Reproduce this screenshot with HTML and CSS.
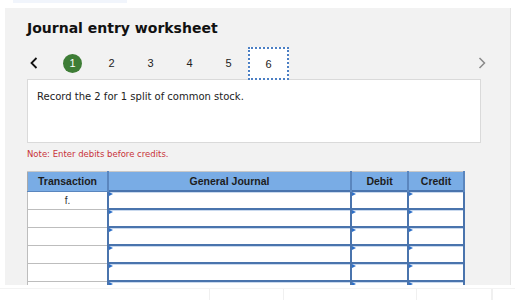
FILE: index.html
```html
<!DOCTYPE html>
<html>
<head>
<meta charset="utf-8">
<link rel="stylesheet" href="styles.css">
</head>
<body>
<div class="topstrip"></div>
<div class="panel">
  <h1 class="title">Journal entry worksheet</h1>
  <div class="nav">
    <div class="prev">
      <svg width="8" height="12" viewBox="0 0 8 12"><path d="M6.5 1 L1.5 6 L6.5 11" fill="none" stroke="#111" stroke-width="1.8"/></svg>
    </div>
    <div class="step"><span class="current">1</span></div>
    <div class="step">2</div>
    <div class="step">3</div>
    <div class="step">4</div>
    <div class="step">5</div>
    <div class="step active">6</div>
    <div class="spacer"></div>
    <div class="next">
      <svg width="8" height="12" viewBox="0 0 8 12"><path d="M1.5 1 L6.5 6 L1.5 11" fill="none" stroke="#8a8a8a" stroke-width="1.5"/></svg>
    </div>
  </div>
  <div class="prompt">Record the 2 for 1 split of common stock.</div>
  <p class="note">Note: Enter debits before credits.</p>
  <table class="journal">
    <thead>
      <tr><th class="c-tr">Transaction</th><th class="c-gj">General Journal</th><th class="c-dr">Debit</th><th class="c-cr">Credit</th></tr>
    </thead>
    <tbody>
      <tr><td class="tr">f.</td><td class="in"></td><td class="in"></td><td class="in"></td></tr>
      <tr><td class="tr"></td><td class="in"></td><td class="in"></td><td class="in"></td></tr>
      <tr><td class="tr"></td><td class="in"></td><td class="in"></td><td class="in"></td></tr>
      <tr><td class="tr"></td><td class="in"></td><td class="in"></td><td class="in"></td></tr>
      <tr><td class="tr"></td><td class="in"></td><td class="in"></td><td class="in"></td></tr>
      <tr><td class="tr"></td><td class="in"></td><td class="in"></td><td class="in"></td></tr>
    </tbody>
  </table>
</div>
<div class="footer">
  <div class="fcell w1"></div><div class="fcell w2"></div><div class="fcell w3"></div><div class="fcell w4"></div><div class="fcell w5"></div>
</div>
</body>
</html>
```
FILE: styles.css
```css
html, body { margin: 0; padding: 0; background: #fff; }
body { font-family: "DejaVu Sans", Verdana, sans-serif; color: #222; width: 515px; height: 300px; overflow: hidden; }

.topstrip { height: 3px; margin-left: 13px; width: 114px; background: #f1f5fc; }
.panel {
  margin-left: 5px; margin-top: 5px;
  width: 506px; height: 277px; overflow: hidden;
  background: #f2f2f2;
  padding: 11px 0 0 22px;
  border-right: 1px solid #e4e4e4;
  box-sizing: border-box;
}
.title { margin: 0; font-size: 14px; line-height: 18px; font-weight: bold; color: #111; }

.nav { display: flex; align-items: center; height: 32px; margin-top: 10px; }
.prev { width: 26px; display: flex; align-items: center; padding-left: 3px; box-sizing: border-box; }
.step { width: 39px; height: 32px; display: flex; align-items: center; justify-content: center;
  font-family: "Liberation Sans", Arial, sans-serif; font-size: 11px; color: #222; }
.step.active { width: 41px; box-sizing: border-box; border: 2px dotted #4b7fc4; background: #fff; height: 33px; margin-top: 1px; }
.current { width: 19px; height: 19px; border-radius: 50%; background: #3e7d36; color: #fff; display: flex; align-items: center; justify-content: center; font-size: 11px; }
.spacer { flex: 1; }
.next { width: 8px; margin-right: 24px; display: flex; }

.prompt { width: 454px; height: 64px; box-sizing: border-box; background: #fff; border: 1px solid #dadada;
  font-size: 10px; padding: 10px 0 0 9px; line-height: 14px; color: #222; }
.note { margin: 5px 0 0 0; font-size: 8.5px; line-height: 12px; color: #c8323a; }

.journal { margin-top: 11px; border-collapse: collapse; table-layout: fixed; }
.journal th { background: #79ace5; height: 18px; padding: 0; font-family: "Liberation Sans", Arial, sans-serif;
  font-size: 10.5px; font-weight: bold; color: #1d1d1d; border-top: 1px solid #c8c8c8; border-left: 2px solid #5a86be; border-right: 2px solid #5a86be; border-bottom: 1px solid #5a86be; }
.journal th.c-tr { border-left: 1px solid #a9a9a9; }
.c-tr { width: 79px; } .c-gj { width: 241px; } .c-dr { width: 55px; } .c-cr { width: 54px; }
.journal td { height: 16px; padding: 0; background: #fff; }
.journal td.tr { border: 1px solid #bdbdbd; font-family: "Liberation Sans", Arial, sans-serif; font-size: 10px; text-align: center; color: #333; }
.journal td.in { border: 2px solid #4a74ad; position: relative; box-shadow: inset 0 1px 0 #c9d9ee; }
.journal td.in::before { content: ""; position: absolute; left: 0; top: 0; border-left: 4px solid #2d6fc8; border-top: 2px solid transparent; border-bottom: 2px solid transparent; }

.footer { display: flex; height: 15px; border-top: 1px solid #f3f3f3; margin-top: 3px; }
.fcell { height: 15px; border-right: 1px solid #f0f0f0; }
.w1 { width: 209px; } .w2 { width: 73px; } .w3 { width: 132px; } .w4 { width: 74px; }
```
